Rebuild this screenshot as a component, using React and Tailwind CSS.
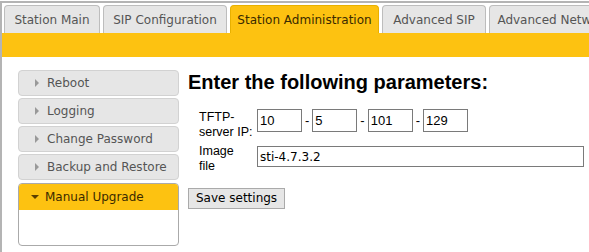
const tabs = [
  { label: "Station Main", width: "w-[96px]" },
  { label: "SIP Configuration", width: "w-[124px]" },
  { label: "Station Administration", width: "w-[149px]", active: true },
  { label: "Advanced SIP", width: "w-[104px]" },
  { label: "Advanced Network", width: "w-[130px]" },
];

const menu = ["Reboot", "Logging", "Change Password", "Backup and Restore"];

const Arrow = ({ open }) => (
  <svg className="h-[8px] w-[8px] shrink-0" viewBox="0 0 8 8">
    {open ? (
      <path d="M0 2h8L4 6z" fill="#5a3e00" />
    ) : (
      <path d="M2 0v8l4-4z" fill="#999" />
    )}
  </svg>
);

const IpBox = ({ value }) => (
  <input
    defaultValue={value}
    className="h-[23px] w-[45px] border border-[#7a7a7a] bg-white px-[2px] text-[13px] text-black outline-none"
  />
);

export default function App() {
  return (
    <div className="h-[252px] w-[589px] overflow-hidden bg-white pt-px font-['DejaVu_Sans',sans-serif]">
      <div className="h-full border-l-2 border-t-2 border-[#b4b4b4]">
        {/* Tabs */}
        <div className="flex items-end gap-[3px] overflow-hidden whitespace-nowrap pl-[2px] pt-[2px]">
          {tabs.map((t) => (
            <div
              key={t.label}
              className={`flex h-[28px] shrink-0 items-center justify-center rounded-t-[4px] border border-b-0 text-[12px] ${t.width} ${
                t.active
                  ? "border-[#e8b000] bg-[#fdc211] text-[#3a2a00]"
                  : "border-[#bdbdbd] bg-[#e6e6e6] text-[#555]"
              }`}
            >
              {t.label}
            </div>
          ))}
        </div>
        <div className="h-[24px] bg-[#fdc211]" />

        {/* Body */}
        <div className="flex pl-[16px] pt-[13px]">
          <div className="flex w-[161px] flex-col gap-[2px]">
            {menu.map((m) => (
              <div
                key={m}
                className="flex h-[26px] items-center gap-[6px] rounded-[4px] border border-[#d2d2d2] bg-[#e6e6e6] pl-[14px] text-[12px] text-[#555]"
              >
                <Arrow />
                {m}
              </div>
            ))}
            <div className="mt-px h-[63px] overflow-hidden rounded-[4px] border border-[#aaa]">
              <div className="flex h-[26px] items-center gap-[6px] bg-[#fdc211] pl-[12px] text-[12px] text-[#3a2a00]">
                <Arrow open />
                Manual Upgrade
              </div>
            </div>
          </div>

          <div className="ml-[9px] flex flex-col font-['Liberation_Sans',Arial,sans-serif]">
            <h1 className="text-[20px] font-bold leading-[24px] text-black">
              Enter the following parameters:
            </h1>
            <div className="mt-[16px] flex items-start pl-[11px]">
              <div className="w-[58px] text-[12.5px] leading-[15px] text-black">
                TFTP-
                <br />
                server IP:
              </div>
              <div className="mt-[-1px] flex items-center gap-[3px] text-[13px]">
                <IpBox value="10" />
                <span>-</span>
                <IpBox value="5" />
                <span>-</span>
                <IpBox value="101" />
                <span>-</span>
                <IpBox value="129" />
              </div>
            </div>
            <div className="mt-[4px] flex items-start pl-[11px]">
              <div className="w-[58px] text-[12.5px] leading-[15px] text-black">
                Image
                <br />
                file
              </div>
              <input
                defaultValue="sti-4.7.3.2"
                className="mt-[2px] h-[21px] w-[327px] border border-[#7a7a7a] bg-white px-[2px] font-['DejaVu_Sans',sans-serif] text-[12px] text-black outline-none"
              />
            </div>
            <div className="mt-[11px]">
              <button className="h-[21px] border border-[#aaa] bg-[#e6e6e6] px-[7px] font-['DejaVu_Sans',sans-serif] text-[12px] text-black">
                Save settings
              </button>
            </div>
          </div>
        </div>
      </div>
    </div>
  );
}
